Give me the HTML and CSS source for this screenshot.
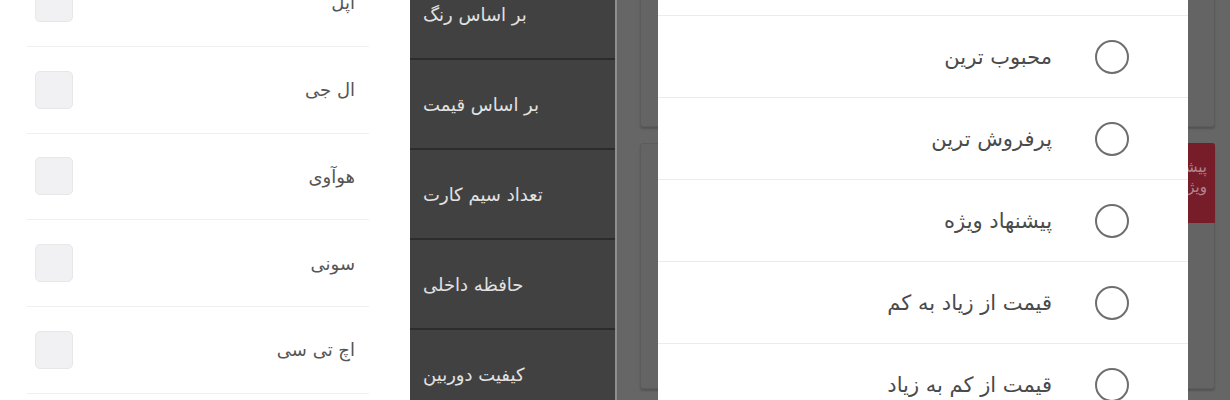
FILE: index.html
```html
<!DOCTYPE html>
<html lang="fa">
<head>
    <meta charset="UTF-8">
    <title>فیلتر و مرتب سازی</title>
    <link rel="stylesheet" href="styles.css">
</head>
<body>
    <div class="page">
        <section class="brands">
            <ul class="brand-list">
                <li class="brand"><span class="name">اپل</span><span class="check"></span></li>
                <li class="brand"><span class="name">ال جی</span><span class="check"></span></li>
                <li class="brand"><span class="name">هوآوی</span><span class="check"></span></li>
                <li class="brand"><span class="name">سونی</span><span class="check"></span></li>
                <li class="brand"><span class="name">اچ تی سی</span><span class="check"></span></li>
            </ul>
        </section>
        <nav class="filters">
            <ul>
                <li>بر اساس رنگ</li>
                <li>بر اساس قیمت</li>
                <li>تعداد سیم کارت</li>
                <li>حافظه داخلی</li>
                <li>کیفیت دوربین</li>
            </ul>
        </nav>
        <section class="screen">
            <div class="cards">
                <div class="card card-top"></div>
                <div class="card card-item">
                    <span class="badge">پیشنهاد ویژه</span>
                </div>
            </div>
            <div class="sort-modal">
                <ul class="sort-list">
                    <li class="sort"><span class="radio"></span><span class="label">جدیدترین</span></li>
                    <li class="sort"><span class="radio"></span><span class="label">محبوب ترین</span></li>
                    <li class="sort"><span class="radio"></span><span class="label">پرفروش ترین</span></li>
                    <li class="sort"><span class="radio"></span><span class="label">پیشنهاد ویژه</span></li>
                    <li class="sort"><span class="radio"></span><span class="label">قیمت از زیاد به کم</span></li>
                    <li class="sort"><span class="radio"></span><span class="label">قیمت از کم به زیاد</span></li>
                </ul>
            </div>
        </section>
    </div>
</body>
</html>
```

FILE: styles.css
```css
*{
    margin: 0;
    padding: 0;
    box-sizing: border-box;
}
li{
    list-style: none;
}
body{
    font-family: "DejaVu Sans", sans-serif;
    background: #fff;
}
.page{
    display: flex;
    width: 1230px;
    height: 400px;
    overflow: hidden;
}

/* brand checkboxes */
.brands{
    width: 410px;
    flex: none;
    background: #fff;
    overflow: hidden;
}
.brand-list{
    margin: -40px 41px 0 27px;
}
.brand{
    display: flex;
    direction: rtl;
    justify-content: space-between;
    align-items: center;
    height: 86.75px;
    padding: 0 14px 0 8px;
    border-bottom: 1px solid #efefef;
}
.brand .name{
    font-size: 18px;
    color: #555;
}
.brand .check{
    width: 38px;
    height: 38px;
    border-radius: 5px;
    background: #f1f1f3;
    border: 1px solid #e7e7ea;
}

/* dark filter menu */
.filters{
    width: 205px;
    flex: none;
    background: #414141;
    overflow: hidden;
}
.filters ul{
    margin-top: -30px;
}
.filters li{
    height: 90px;
    line-height: 90px;
    direction: rtl;
    text-align: left;
    padding-left: 13px;
    font-size: 18px;
    color: #e2e2e2;
    border-bottom: 2px solid #2c2c2c;
}

/* dimmed screen behind the sort dialog */
.screen{
    flex: 1;
    position: relative;
    background: #666;
    border-left: 2px solid #8e8e8e;
    overflow: hidden;
}
.cards{
    padding: 0 15px 0 23px;
}
.card{
    position: relative;
    background: #646464;
    border: 1px solid #5c5c5c;
    border-radius: 3px;
    box-shadow: 0 2px 2px rgba(0,0,0,.18);
}
.card-top{
    height: 140px;
    margin-top: -13px;
}
.card-item{
    height: 246px;
    margin-top: 16px;
}
.badge{
    position: absolute;
    top: -1px;
    right: -1px;
    width: 64px;
    height: 80px;
    padding: 14px 8px 0 0;
    direction: rtl;
    background: #771c29;
    color: #b08790;
    font-size: 15px;
    line-height: 20px;
    border-radius: 3px 3px 0 0;
}
.sort-modal{
    position: absolute;
    top: 0;
    bottom: 0;
    left: 41px;
    width: 530px;
    background: #fff;
    overflow: hidden;
}
.sort-list{
    margin-top: -66px;
}
.sort{
    display: flex;
    direction: rtl;
    align-items: center;
    height: 82px;
    padding-right: 59px;
    border-bottom: 1px solid #ececec;
}
.sort .radio{
    width: 34px;
    height: 34px;
    border: 2px solid #6e6e6e;
    border-radius: 50%;
}
.sort .label{
    margin-right: 43px;
    font-size: 21px;
    color: #4a4a4a;
}
```
